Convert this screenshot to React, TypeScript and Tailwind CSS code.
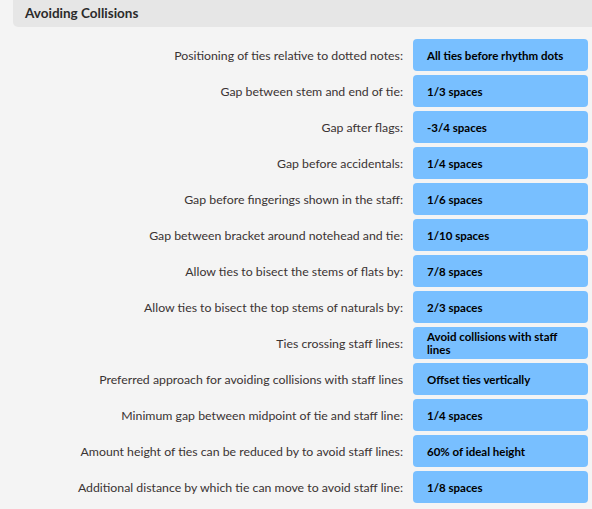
import React from "react";

const rows: { label: string; value: string }[] = [
  { label: "Positioning of ties relative to dotted notes:", value: "All ties before rhythm dots" },
  { label: "Gap between stem and end of tie:", value: "1/3 spaces" },
  { label: "Gap after flags:", value: "-3/4 spaces" },
  { label: "Gap before accidentals:", value: "1/4 spaces" },
  { label: "Gap before fingerings shown in the staff:", value: "1/6 spaces" },
  { label: "Gap between bracket around notehead and tie:", value: "1/10 spaces" },
  { label: "Allow ties to bisect the stems of flats by:", value: "7/8 spaces" },
  { label: "Allow ties to bisect the top stems of naturals by:", value: "2/3 spaces" },
  { label: "Ties crossing staff lines:", value: "Avoid collisions with staff lines" },
  { label: "Preferred approach for avoiding collisions with staff lines", value: "Offset ties vertically" },
  { label: "Minimum gap between midpoint of tie and staff line:", value: "1/4 spaces" },
  { label: "Amount height of ties can be reduced by to avoid staff lines:", value: "60% of ideal height" },
  { label: "Additional distance by which tie can move to avoid staff line:", value: "1/8 spaces" },
];

export default function App() {
  return (
    <div
      className="w-[592px] h-[509px] bg-[#f4f4f4] overflow-hidden"
      style={{ fontFamily: "Lato, 'Noto Sans', sans-serif" }}
    >
      {/* Section header */}
      <div className="ml-[13px] h-[27px] bg-[#e6e6e6] rounded-bl-[5px] flex items-center pl-[12px]">
        <span className="text-[13.5px] font-bold text-[#2b2b2b]">Avoiding Collisions</span>
      </div>

      {/* Options */}
      <div className="mt-[12px] flex flex-col gap-[4px]">
        {rows.map((row) => (
          <div key={row.label} className="flex items-center">
            <div className="flex-1 text-right pr-[10px] pt-[2px] text-[12.3px] text-[#3a3333]">
              {row.label}
            </div>
            <div className="w-[175px] h-[32px] mr-[4px] bg-[#78bfff] rounded-[4px] flex items-center pl-[14px] pr-[8px] text-[11.5px] font-bold text-black leading-[13px]">
              {row.value}
            </div>
          </div>
        ))}
      </div>
    </div>
  );
}
